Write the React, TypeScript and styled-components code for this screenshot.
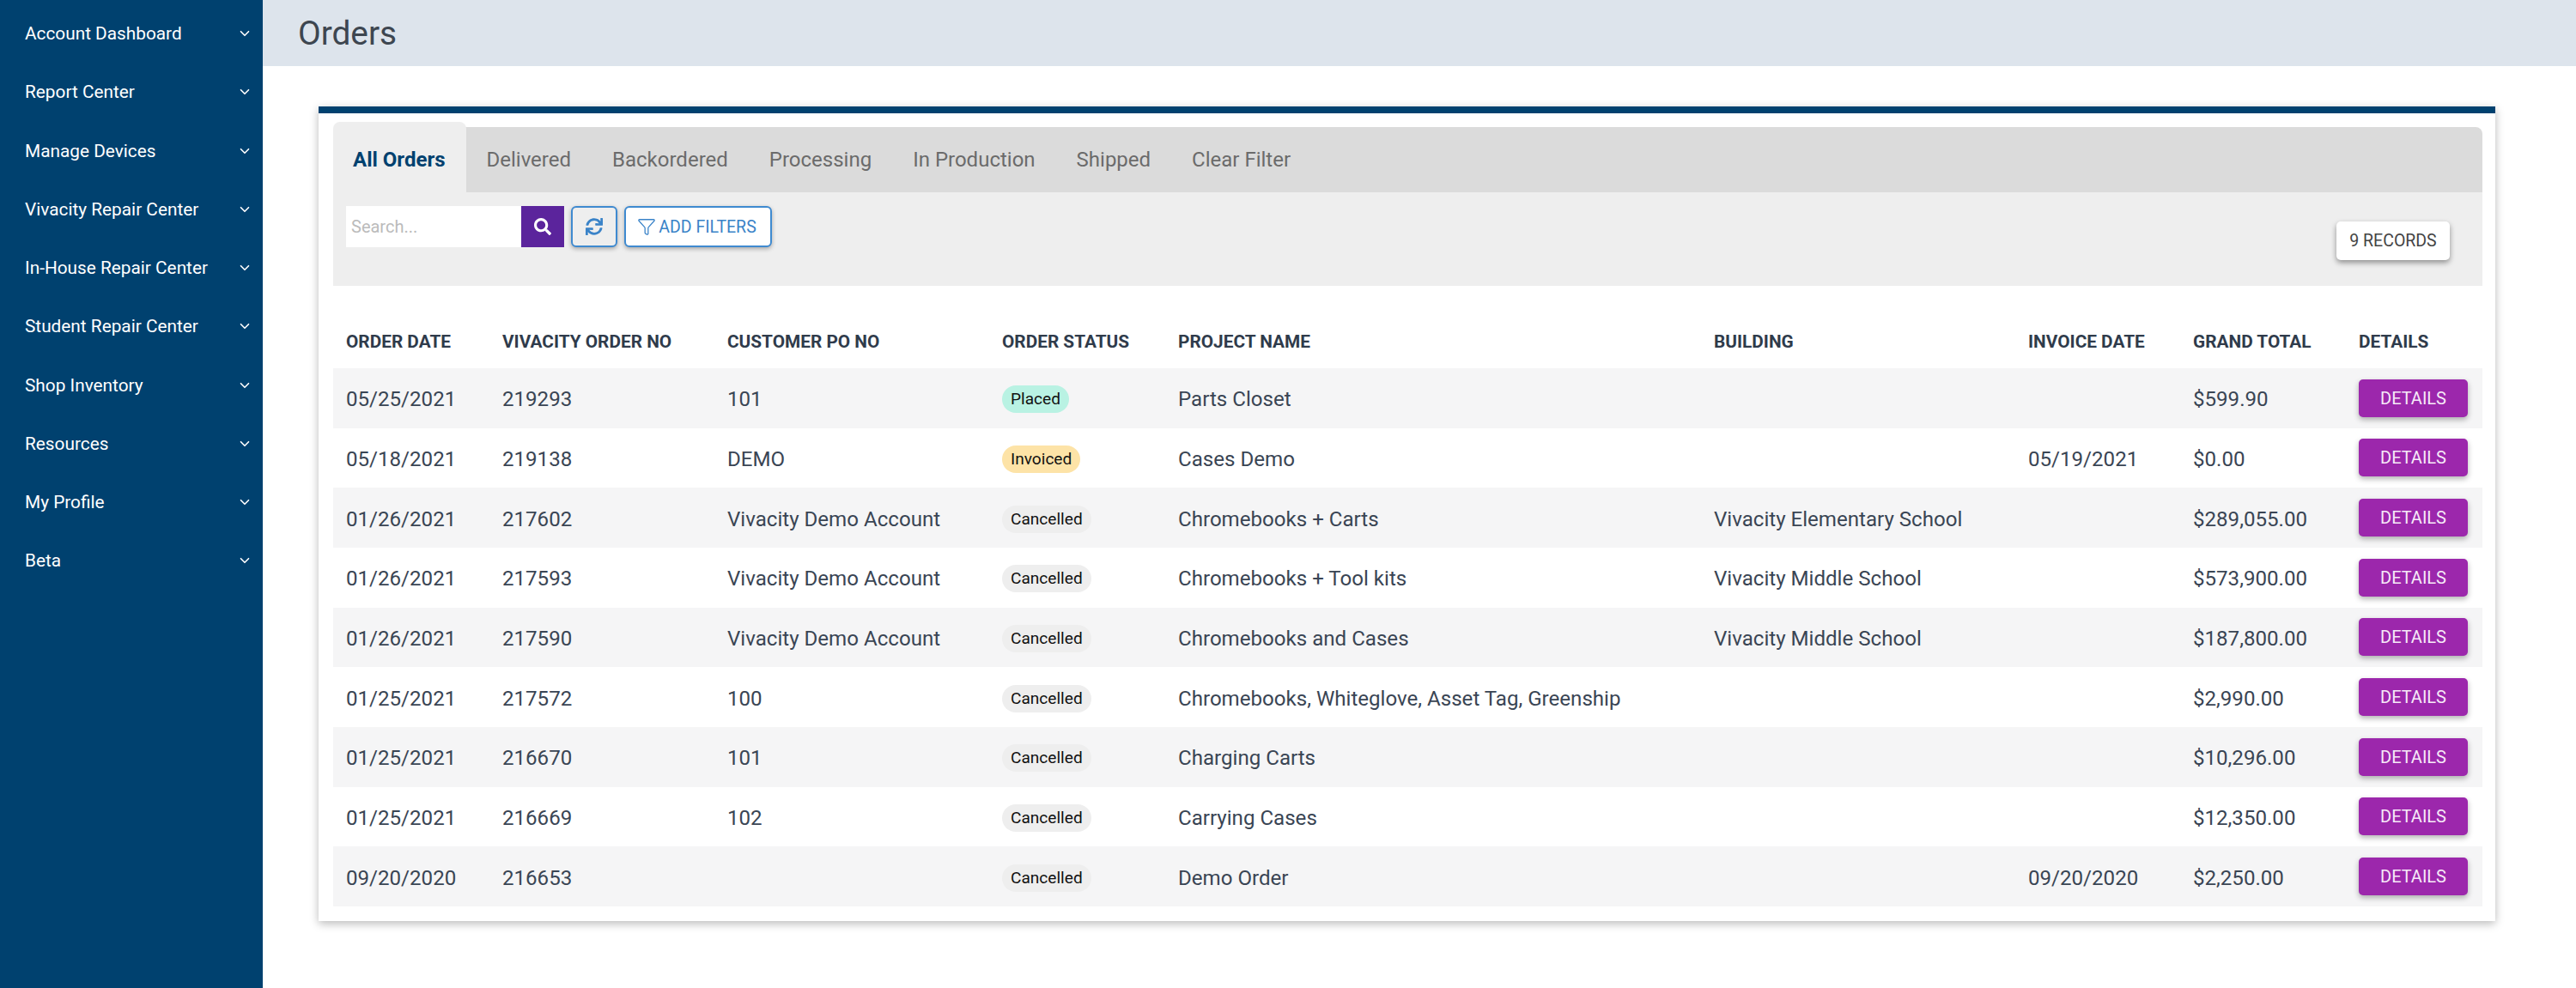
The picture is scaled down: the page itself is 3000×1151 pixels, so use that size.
import styled, { createGlobalStyle } from 'styled-components';
import { ChevronDown, Funnel } from 'lucide-react';
import { FaSearch, FaSync } from 'react-icons/fa';

const GlobalStyle = createGlobalStyle`
  html, body {
    margin: 0;
    padding: 0;
    background: #fff;
    font-family: Roboto, "Liberation Sans", sans-serif;
  }
  * {
    box-sizing: border-box;
  }
`;

const Page = styled.div`
  display: flex;
  min-height: 100vh;
`;

const Sidebar = styled.nav`
  flex: 0 0 306px;
  padding-top: 5px;
  background: #00416f;
`;

const NavItem = styled.div`
  display: flex;
  align-items: center;
  justify-content: space-between;
  height: 68.25px;
  padding: 0 12px 0 29px;
  color: #fff;
  font-size: 20.8px;
`;

const Main = styled.main`
  flex: 1;
  min-width: 0;
`;

const TopBar = styled.header`
  display: flex;
  align-items: center;
  height: 77px;
  padding-left: 41px;
  background: #dde4ec;
`;

const Title = styled.h1`
  margin: 0;
  color: #3d4650;
  font-size: 38.8px;
  font-weight: 400;
`;

const Card = styled.section`
  margin: 47px 94px 0 65px;
  padding: 10px 15px 17px 17px;
  background: #fff;
  border-top: 8px solid #00416f;
  box-shadow: 0 3px 10px rgba(0, 0, 0, 0.28);
`;

const Tabs = styled.div`
  display: flex;
  align-items: stretch;
  height: 76px;
  margin-top: 6px;
  background: #dbdbdb;
  border-radius: 8px 8px 0 0;
`;

const Tab = styled.div<{ $active?: boolean }>`
  display: flex;
  align-items: center;
  padding: 0 24px;
  color: ${({ $active }) => ($active ? '#00416f' : '#6b6b6b')};
  font-size: 24px;
  font-weight: ${({ $active }) => ($active ? 700 : 400)};
  ${({ $active }) =>
    $active &&
    `
    height: 82px;
    margin-top: -6px;
    padding: 6px 24px 0 23px;
    background: #eee;
    border-radius: 8px 8px 0 0;
  `}
`;

const Toolbar = styled.div`
  display: flex;
  justify-content: space-between;
  height: 109px;
  padding: 16px 38px 0 15px;
  background: #eee;
`;

const ToolGroup = styled.div`
  display: flex;
  align-items: flex-start;
`;

const SearchInput = styled.input`
  width: 204px;
  height: 48px;
  padding: 0 6px;
  border: 0;
  outline: 0;
  background: #fff;
  color: #333;
  font-family: inherit;
  font-size: 20px;

  &::placeholder {
    color: #bbb;
    opacity: 1;
  }
`;

const SearchButton = styled.button`
  display: flex;
  align-items: center;
  justify-content: center;
  width: 50px;
  height: 48px;
  padding: 0;
  border: 0;
  background: #5b249c;
  color: #fff;
  font-size: 20px;
`;

const OutlineButton = styled.button<{ $square?: boolean }>`
  display: flex;
  align-items: center;
  gap: 3px;
  justify-content: center;
  width: ${({ $square }) => ($square ? '54px' : '172px')};
  height: 48px;
  margin-left: 8px;
  padding: 0 ${({ $square }) => ($square ? '0' : '3px')} 0 0;
  border: 2px solid #3f8ad0;
  border-radius: 6px;
  background: ${({ $square }) => ($square ? '#eee' : '#fff')};
  color: #3a83c8;
  font-family: inherit;
  font-size: 19.5px;
  box-shadow: 0 2px 5px rgba(0, 0, 0, 0.3);
`;

const Records = styled.div`
  display: flex;
  align-items: center;
  justify-content: center;
  width: 132px;
  height: 45px;
  margin-top: 18px;
  border-radius: 5px;
  background: #fff;
  color: #444;
  font-size: 19.5px;
  box-shadow: 0 3px 6px rgba(0, 0, 0, 0.4);
`;

const Table = styled.table`
  width: 100%;
  margin-top: 30px;
  border-collapse: collapse;
  table-layout: fixed;
`;

const HeadCell = styled.th<{ $width: number }>`
  width: ${({ $width }) => $width}px;
  height: 66px;
  padding: 4px 0 0 15px;
  color: #2f3b4b;
  font-size: 20.8px;
  font-weight: 700;
  text-align: left;
  white-space: nowrap;
`;

const Row = styled.tr`
  height: 69.67px;

  &:nth-child(odd) {
    background: #f5f5f6;
  }
`;

const Cell = styled.td`
  padding: 3px 0 0 15px;
  color: #3a4554;
  font-size: 24.1px;
  white-space: nowrap;
`;

const ActionCell = styled(Cell)`
  padding-top: 0;
`;

const statusColors: Record<string, string> = {
  Placed: '#b9f2e3',
  Invoiced: '#fde3a7',
  Cancelled: '#eeeeee',
};

const Chip = styled.span<{ $status: string }>`
  display: inline-block;
  height: 32px;
  padding: 0 10px;
  border-radius: 16px;
  background: ${({ $status }) => statusColors[$status]};
  color: #111;
  font-size: 19.1px;
  line-height: 32px;
  vertical-align: middle;
`;

const DetailsButton = styled.button`
  display: block;
  width: 127px;
  height: 44px;
  padding: 0;
  border: 0;
  border-radius: 5px;
  background: #9c27ac;
  color: #f6e9f8;
  font-family: inherit;
  font-size: 20px;
  box-shadow: 0 3px 6px rgba(0, 0, 0, 0.3);
`;

const navItems = [
  'Account Dashboard',
  'Report Center',
  'Manage Devices',
  'Vivacity Repair Center',
  'In-House Repair Center',
  'Student Repair Center',
  'Shop Inventory',
  'Resources',
  'My Profile',
  'Beta',
];

const tabs = ['Delivered', 'Backordered', 'Processing', 'In Production', 'Shipped', 'Clear Filter'];

const columns = [
  { label: 'ORDER DATE', width: 182 },
  { label: 'VIVACITY ORDER NO', width: 262 },
  { label: 'CUSTOMER PO NO', width: 320 },
  { label: 'ORDER STATUS', width: 205 },
  { label: 'PROJECT NAME', width: 624 },
  { label: 'BUILDING', width: 366 },
  { label: 'INVOICE DATE', width: 192 },
  { label: 'GRAND TOTAL', width: 193 },
  { label: 'DETAILS', width: 159 },
];

const orders = [
  ['05/25/2021', '219293', '101', 'Placed', 'Parts Closet', '', '', '$599.90'],
  ['05/18/2021', '219138', 'DEMO', 'Invoiced', 'Cases Demo', '', '05/19/2021', '$0.00'],
  ['01/26/2021', '217602', 'Vivacity Demo Account', 'Cancelled', 'Chromebooks + Carts', 'Vivacity Elementary School', '', '$289,055.00'],
  ['01/26/2021', '217593', 'Vivacity Demo Account', 'Cancelled', 'Chromebooks + Tool kits', 'Vivacity Middle School', '', '$573,900.00'],
  ['01/26/2021', '217590', 'Vivacity Demo Account', 'Cancelled', 'Chromebooks and Cases', 'Vivacity Middle School', '', '$187,800.00'],
  ['01/25/2021', '217572', '100', 'Cancelled', 'Chromebooks, Whiteglove, Asset Tag, Greenship', '', '', '$2,990.00'],
  ['01/25/2021', '216670', '101', 'Cancelled', 'Charging Carts', '', '', '$10,296.00'],
  ['01/25/2021', '216669', '102', 'Cancelled', 'Carrying Cases', '', '', '$12,350.00'],
  ['09/20/2020', '216653', '', 'Cancelled', 'Demo Order', '', '09/20/2020', '$2,250.00'],
];

export default function App() {
  return (
    <>
      <GlobalStyle />
      <Page>
        <Sidebar>
          {navItems.map((item) => (
            <NavItem key={item}>
              {item}
              <ChevronDown size={18} strokeWidth={2.2} />
            </NavItem>
          ))}
        </Sidebar>
        <Main>
          <TopBar>
            <Title>Orders</Title>
          </TopBar>
          <Card>
            <Tabs>
              <Tab $active>All Orders</Tab>
              {tabs.map((tab) => (
                <Tab key={tab}>{tab}</Tab>
              ))}
            </Tabs>
            <Toolbar>
              <ToolGroup>
                <SearchInput placeholder="Search..." />
                <SearchButton>
                  <FaSearch />
                </SearchButton>
                <OutlineButton $square>
                  <FaSync size={20} />
                </OutlineButton>
                <OutlineButton>
                  <Funnel size={22} strokeWidth={1.4} />
                  ADD FILTERS
                </OutlineButton>
              </ToolGroup>
              <Records>9 RECORDS</Records>
            </Toolbar>
            <Table>
              <thead>
                <tr>
                  {columns.map((col) => (
                    <HeadCell key={col.label} $width={col.width}>
                      {col.label}
                    </HeadCell>
                  ))}
                </tr>
              </thead>
              <tbody>
                {orders.map((order) => (
                  <Row key={order[1]}>
                    {order.map((value, i) => (
                      <Cell key={i}>{i === 3 ? <Chip $status={value}>{value}</Chip> : value}</Cell>
                    ))}
                    <ActionCell>
                      <DetailsButton>DETAILS</DetailsButton>
                    </ActionCell>
                  </Row>
                ))}
              </tbody>
            </Table>
          </Card>
        </Main>
      </Page>
    </>
  );
}
